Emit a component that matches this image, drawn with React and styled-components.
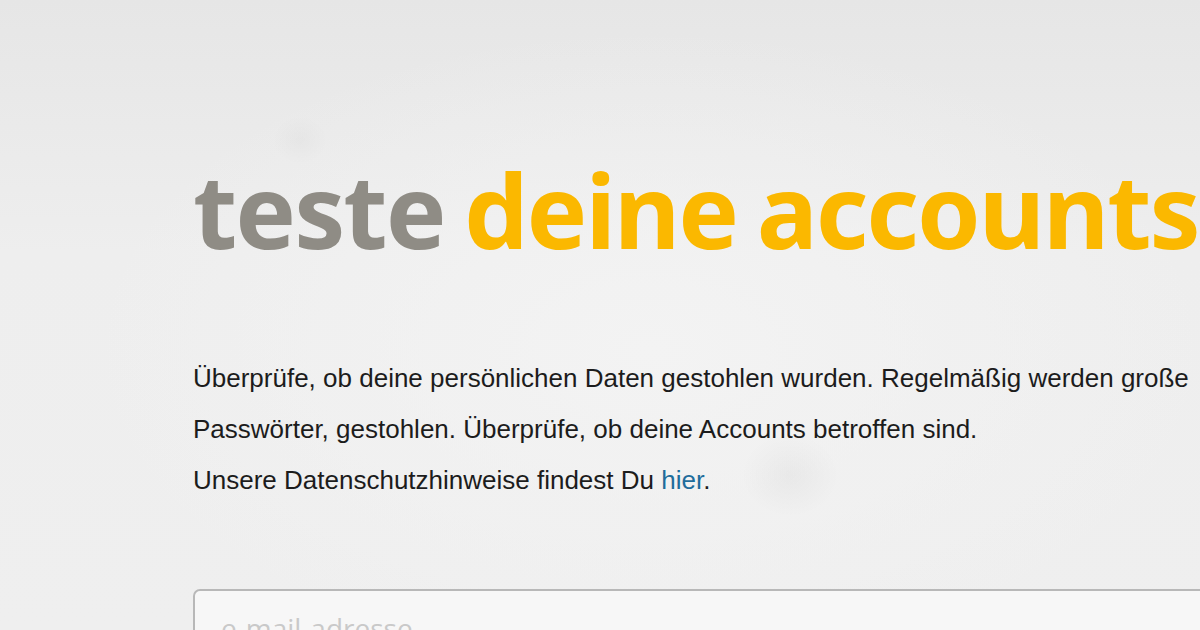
import React from "react";
import styled, { createGlobalStyle } from "styled-components";

const GlobalStyle = createGlobalStyle`
  html, body {
    margin: 0;
    padding: 0;
    width: 1200px;
    height: 630px;
    overflow: hidden;
  }
  body {
    background: #ececec;
    font-family: "Liberation Sans", Arial, sans-serif;
  }
`;

const Page = styled.div`
  position: relative;
  width: 1200px;
  height: 630px;
  overflow: hidden;
  background:
    radial-gradient(ellipse 70px 60px at 790px 475px, rgba(0, 0, 0, 0.035), transparent 70%),
    radial-gradient(ellipse 40px 35px at 300px 140px, rgba(0, 0, 0, 0.025), transparent 70%),
    radial-gradient(ellipse 700px 400px at 650px 350px, #f3f3f3, transparent 80%),
    linear-gradient(180deg, #e6e6e6 0%, #eeeeee 40%, #efefef 100%);
`;

const Content = styled.main`
  display: flex;
  flex-direction: column;
  padding: 160px 0 0 193px;
  width: 1300px;
`;

const Headline = styled.h1`
  margin: 0;
  font-family: "Noto Sans", "DejaVu Sans", sans-serif;
  font-weight: 700;
  font-size: 102px;
  line-height: 100px;
  letter-spacing: -2px;
  word-spacing: -5px;
  white-space: nowrap;
`;

const Word = styled.span`
  color: ${props => props.accent};
`;

const Intro = styled.div`
  margin-top: 93px;
  font-size: 26px;
  line-height: 51px;
  color: #1c1c1c;
  white-space: nowrap;
`;

const Line = styled.p`
  margin: 0;
`;

const Link = styled.a`
  color: #1f6d9c;
  text-decoration: none;
`;

const EmailField = styled.input`
  margin-top: 83px;
  width: 1100px;
  height: 70px;
  box-sizing: border-box;
  border: 2px solid #b8b8b8;
  border-radius: 7px;
  background: #f7f7f7;
  padding: 8px 26px 0;
  font-family: "Open Sans", "Noto Sans", sans-serif;
  font-size: 28px;
  outline: none;

  &::placeholder {
    color: #c9c9c9;
  }
`;

export default function App() {
  return (
    <Page>
      <GlobalStyle />
      <Content>
        <Headline>
          <Word accent="#8f8c85">teste</Word> <Word accent="#fbb800">deine accounts</Word>
        </Headline>
        <Intro>
          <Line>
            Überprüfe, ob deine persönlichen Daten gestohlen wurden. Regelmäßig werden große
          </Line>
          <Line>Passwörter, gestohlen. Überprüfe, ob deine Accounts betroffen sind.</Line>
          <Line>
            Unsere Datenschutzhinweise findest Du <Link href="#">hier</Link>.
          </Line>
        </Intro>
        <EmailField type="email" placeholder="e-mail-adresse" />
      </Content>
    </Page>
  );
}
